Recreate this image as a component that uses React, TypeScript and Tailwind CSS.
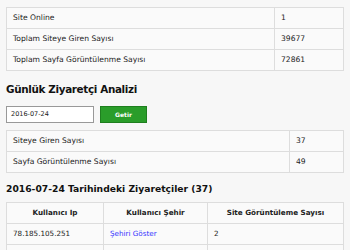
import React from "react";

const font = { fontFamily: '"Comic Sans MS", "DejaVu Sans", sans-serif' };

export default function App() {
  const cell = "border border-[#dddddd] px-[6px] h-[21px] align-middle";
  return (
    <div className="w-[350px] h-[250px] overflow-hidden bg-[#f7f7f7] text-[#222] pt-[7px] px-[6px]" style={font}>
      <table className="w-[338px] border-collapse bg-[#fafafa] text-[7.6px]">
        <tbody>
          <tr>
            <td className={cell}>Site Online</td>
            <td className={cell + " w-[69px]"}>1</td>
          </tr>
          <tr>
            <td className={cell}>Toplam Siteye Giren Sayısı</td>
            <td className={cell}>39677</td>
          </tr>
          <tr>
            <td className={cell}>Toplam Sayfa Görüntülenme Sayısı</td>
            <td className={cell}>72861</td>
          </tr>
        </tbody>
      </table>
      <h2 className="mt-[10px] text-[10.4px] tracking-[-0.35px] font-bold leading-[17px] text-[#111]">Günlük Ziyaretçi Analizi</h2>
      <div className="mt-[8px] flex gap-[6px]">
        <div className="w-[88px] h-[17px] border border-[#999] bg-white px-[4px] text-[6.5px] flex items-center">2016-07-24</div>
        <button className="w-[47px] h-[17px] bg-[#2a9d2a] border border-[#1f7f1f] text-white text-[6px] font-bold">Getir</button>
      </div>
      <table className="mt-[7px] w-[338px] border-collapse bg-[#fafafa] text-[7.6px]">
        <tbody>
          <tr>
            <td className={cell}>Siteye Giren Sayısı</td>
            <td className={cell + " w-[54px]"}>37</td>
          </tr>
          <tr>
            <td className={cell}>Sayfa Görüntülenme Sayısı</td>
            <td className={cell}>49</td>
          </tr>
        </tbody>
      </table>
      <h3 className="mt-[9px] text-[9.2px] font-bold leading-[14px] text-[#111]">2016-07-24 Tarihindeki Ziyaretçiler (37)</h3>
      <table className="mt-[6px] w-[338px] border-collapse bg-[#fafafa] text-[7.2px]">
        <thead>
          <tr>
            <th className={cell + " w-[97px] font-bold text-center"}>Kullanıcı Ip</th>
            <th className={cell + " w-[104px] font-bold text-center"}>Kullanıcı Şehir</th>
            <th className={cell + " font-bold text-center"}>Site Görüntüleme Sayısı</th>
          </tr>
        </thead>
        <tbody>
          <tr>
            <td className={cell}>78.185.105.251</td>
            <td className={cell}><span className="text-[#3333ff]">Şehiri Göster</span></td>
            <td className={cell}>2</td>
          </tr>
          <tr>
            <td className={cell}>&nbsp;</td>
            <td className={cell}>&nbsp;</td>
            <td className={cell}>&nbsp;</td>
          </tr>
        </tbody>
      </table>
    </div>
  );
}
